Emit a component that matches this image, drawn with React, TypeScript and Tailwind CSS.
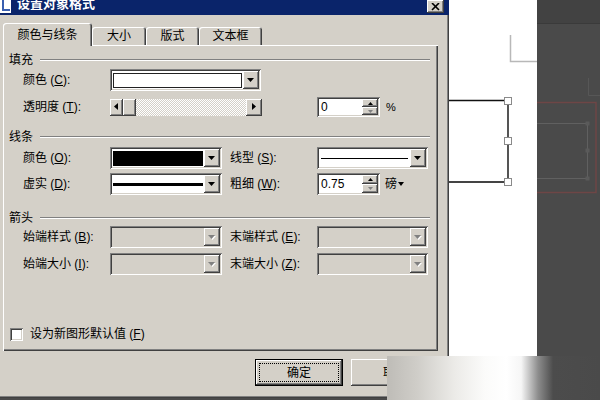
import React from 'react';

// classic 3D bevels
const RAISED = 'shadow-[inset_-1px_-1px_#404040,inset_1px_1px_#ffffff,inset_-2px_-2px_#808080,inset_2px_2px_#d4d0c8]';
const SUNKEN = 'shadow-[inset_1px_1px_#808080,inset_-1px_-1px_#ffffff,inset_2px_2px_#404040,inset_-2px_-2px_#d4d0c8]';

function Tri({ dir = 'down', disabled = false }: { dir?: 'down' | 'up' | 'left' | 'right'; disabled?: boolean }) {
  const d: Record<string, string> = {
    down: 'M0 0h7L3.5 4z',
    up: 'M0 4h7L3.5 0z',
    left: 'M4 0v7L0 3.5z',
    right: 'M0 0v7L4 3.5z',
  };
  const w = dir === 'left' || dir === 'right' ? 4 : 7;
  const h = dir === 'left' || dir === 'right' ? 7 : 4;
  return (
    <svg width={w + 1} height={h + 1} viewBox={`0 0 ${w + 1} ${h + 1}`}>
      {disabled && <path d={d[dir]} transform="translate(1 1)" fill="#ffffff" />}
      <path d={d[dir]} fill={disabled ? '#808080' : '#000000'} />
    </svg>
  );
}

function DropBtn({ disabled = false }: { disabled?: boolean }) {
  return (
    <div className={`w-[16px] h-full shrink-0 bg-[#d4d0c8] flex items-center justify-center ${RAISED}`}>
      <Tri disabled={disabled} />
    </div>
  );
}

function Combo({ w, children, disabled = false }: { w: string; children?: React.ReactNode; disabled?: boolean }) {
  return (
    <div className={`flex h-[22px] p-[2px] ${disabled ? 'bg-[#d4d0c8]' : 'bg-white'} ${SUNKEN} ${w}`}>
      <div className="flex-1 flex items-center px-[1px] min-w-0">{children}</div>
      <DropBtn disabled={disabled} />
    </div>
  );
}

function Spin({ value, h }: { value: string; h: string }) {
  return (
    <div className={`flex w-[63px] p-[2px] bg-white ${SUNKEN} ${h}`}>
      <span className="flex-1 pl-[2px] flex items-center">{value}</span>
      <div className="flex flex-col w-[16px]">
        <div className={`flex-1 bg-[#d4d0c8] flex items-center justify-center ${RAISED}`}>
          <svg width="5" height="3" viewBox="0 0 5 3"><path d="M0 3h5L2.5 0z" fill="#000" /></svg>
        </div>
        <div className={`flex-1 bg-[#d4d0c8] flex items-center justify-center ${RAISED}`}>
          <svg width="5" height="3" viewBox="0 0 5 3"><path d="M0 0h5L2.5 3z" fill="#808080" /></svg>
        </div>
      </div>
    </div>
  );
}

function Label({ text, k }: { text: string; k: string }) {
  return (
    <span className="w-[87px] shrink-0 whitespace-nowrap">
      {text} (<u>{k}</u>):
    </span>
  );
}

function Group({ title }: { title: string }) {
  return (
    <div className="flex items-center h-[14px] pl-[6px]">
      <span>{title}</span>
      <div className="flex-1 ml-[7px] mr-[8px] h-[2px] border-t border-[#808080] border-b border-b-white" />
    </div>
  );
}

function Tab({ label, w, active = false }: { label: string; w: string; active?: boolean }) {
  return (
    <div
      className={`${w} ${active ? 'h-[23px] -mb-[1px] z-10' : 'h-[18px]'} relative rounded-t-[3px] bg-[#d4d0c8] flex items-center justify-center shadow-[inset_1px_1px_#ffffff,inset_-1px_0_#404040,inset_-2px_0_#808080]`}
    >
      {label}
    </div>
  );
}

function Canvas() {
  return (
    <div className="flex h-full">
      <div className="w-[88px] h-full bg-white">
        <svg width="88" height="400" viewBox="0 0 88 400">
          <path d="M61.5 35V61.5H88" fill="none" stroke="#b8b8b8" strokeWidth="1.5" />
          <path d="M0 100.5H59" stroke="#111" strokeWidth="1.5" />
          <path d="M59 101V182" stroke="#555" strokeWidth="2" />
          <path d="M0 182H59" stroke="#444" strokeWidth="2" />
          {[101, 141, 182].map((y) => (
            <rect key={y} x="55.5" y={y - 3.5} width="7" height="7" fill="#fff" stroke="#8a8a8a" />
          ))}
        </svg>
      </div>
      <div className="w-[63px] h-full bg-[#4a4a4a]">
        <svg width="63" height="400" viewBox="0 0 63 400">
          <rect x="0" y="0" width="63" height="23" fill="#424242" />
          <path d="M0 23.5H63" stroke="#3a3a3a" />
          <path d="M51.5 78V95.5H63" fill="none" stroke="#575757" />
          <rect x="-2" y="102.5" width="61" height="90" fill="none" stroke="#6e4646" strokeWidth="1.5" />
          <path d="M0 123.5H50.5V178.5H0" fill="none" stroke="#606060" />
          {[123, 150, 178].map((y) => (
            <rect key={y} x="48.5" y={y - 1.5} width="4" height="4" fill="#5a5a5a" />
          ))}
        </svg>
      </div>
    </div>
  );
}

export default function App() {
  return (
    <div className="relative w-[600px] h-[400px] overflow-hidden flex bg-[#4a4a4a] text-[12px] text-black font-['Liberation_Sans','Noto_Sans_CJK_SC',sans-serif]">
      {/* Dialog */}
      <div className={`w-[449px] h-[398px] shrink-0 flex flex-col bg-[#d4d0c8] shadow-[inset_-1px_-1px_#404040,inset_-2px_-2px_#808080]`}>
        {/* Title bar */}
        <div className="h-[15px] shrink-0 bg-[#0a246a] flex items-start overflow-hidden">
          <svg width="12" height="13" viewBox="0 0 12 13" className="shrink-0">
            <rect x="0" y="0" width="11" height="13" fill="#ffffff" />
            <rect x="2" y="0" width="2" height="11" fill="#3a5fb0" />
            <rect x="4" y="9" width="6" height="2" fill="#3a5fb0" />
          </svg>
          <span className="ml-[5px] -mt-[4px] text-white font-bold text-[13px] leading-[16px] whitespace-nowrap">设置对象格式</span>
          <div className="flex-1" />
          <div className={`w-[17px] h-[13px] mr-[5px] bg-[#d4d0c8] flex items-center justify-center ${RAISED}`}>
            <svg width="9" height="8" viewBox="0 0 9 8">
              <path d="M1 0L8 7M8 0L1 7" stroke="#000" strokeWidth="1.6" />
            </svg>
          </div>
        </div>

        {/* Tabs */}
        <div className="h-[30px] shrink-0 flex items-end pl-[3px]">
          <Tab label="颜色与线条" w="w-[89px]" active />
          <Tab label="大小" w="w-[54px]" />
          <Tab label="版式" w="w-[53px]" />
          <Tab label="文本框" w="w-[63px]" />
        </div>

        {/* Panel */}
        <div className="ml-[3px] w-[435px] h-[306px] shrink-0 flex flex-col pt-[8px] shadow-[inset_1px_1px_#ffffff,inset_-1px_-1px_#404040,inset_-2px_-2px_#808080]">
          <Group title="填充" />
          <div className="flex items-center h-[22px] mt-[2px] pl-[20px]">
            <Label text="颜色" k="C" />
            <Combo w="w-[151px]">
              <div className="w-full h-[15px] border border-[#222] bg-white" />
            </Combo>
          </div>
          <div className="flex items-center h-[20px] mt-[6px] pl-[20px]">
            <Label text="透明度" k="T" />
            <div className="flex h-[17px] w-[152px] shrink-0">
              <div className={`w-[13px] bg-[#d4d0c8] flex items-center justify-center ${RAISED}`}>
                <Tri dir="left" />
              </div>
              <div className={`w-[13px] bg-[#d4d0c8] ${RAISED}`} />
              <div className="flex-1 bg-[repeating-conic-gradient(#ffffff_0%_25%,#d4d0c8_0%_50%)] bg-[length:2px_2px]" />
              <div className={`w-[16px] bg-[#d4d0c8] flex items-center justify-center ${RAISED}`}>
                <Tri dir="right" />
              </div>
            </div>
            <div className="ml-[55px]">
              <Spin value="0" h="h-[20px]" />
            </div>
            <span className="ml-[6px] text-[11px]">%</span>
          </div>

          <div className="mt-[13px]">
            <Group title="线条" />
          </div>
          <div className="flex items-center h-[22px] mt-[3px] pl-[20px]">
            <Label text="颜色" k="O" />
            <Combo w="w-[112px]">
              <div className="w-full h-[15px] bg-black" />
            </Combo>
            <div className="ml-[8px] flex items-center">
              <Label text="线型" k="S" />
              <Combo w="w-[111px]">
                <div className="w-full h-px bg-black mx-[1px]" />
              </Combo>
            </div>
          </div>
          <div className="flex items-center h-[22px] mt-[4px] pl-[20px]">
            <Label text="虚实" k="D" />
            <Combo w="w-[112px]">
              <div className="w-full h-[3px] bg-black" />
            </Combo>
            <div className="ml-[8px] flex items-center">
              <Label text="粗细" k="W" />
              <Spin value="0.75" h="h-[22px]" />
              <span className="ml-[5px] flex items-center">
                磅
                <svg width="6" height="4" viewBox="0 0 6 4" className="ml-[1px]"><path d="M0 0h6L3 4z" fill="#000" /></svg>
              </span>
            </div>
          </div>

          <div className="mt-[16px]">
            <Group title="箭头" />
          </div>
          <div className="flex items-center h-[22px] mt-[1px] pl-[20px]">
            <Label text="始端样式" k="B" />
            <Combo w="w-[112px]" disabled />
            <div className="ml-[8px] flex items-center">
              <Label text="末端样式" k="E" />
              <Combo w="w-[111px]" disabled />
            </div>
          </div>
          <div className="flex items-center h-[22px] mt-[5px] pl-[20px]">
            <Label text="始端大小" k="I" />
            <Combo w="w-[112px]" disabled />
            <div className="ml-[8px] flex items-center">
              <Label text="末端大小" k="Z" />
              <Combo w="w-[111px]" disabled />
            </div>
          </div>

          <div className="flex items-center h-[14px] mt-[52px] pl-[7px]">
            <div className={`w-[13px] h-[13px] bg-white ${SUNKEN}`} />
            <span className="ml-[7px]">
              设为新图形默认值 (<u>F</u>)
            </span>
          </div>
        </div>

        {/* Buttons */}
        <div className="flex mt-[8px] pl-[255px] gap-[8px]">
          <div className="w-[88px] h-[27px] border border-black">
            <div className={`h-full p-[3px] bg-[#d4d0c8] flex ${RAISED}`}>
              <div className="flex-1 border border-dotted border-black flex items-center justify-center">确定</div>
            </div>
          </div>
          <div className={`w-[88px] h-[27px] bg-[#d4d0c8] flex items-center justify-center ${RAISED}`}>取消</div>
        </div>
      </div>

      <Canvas />

      {/* blurred watermark strip over the bottom right */}
      <div className="absolute left-[387px] top-[356px] w-[213px] h-[44px] bg-[linear-gradient(90deg,#bebcb7_0%,#cfcdc8_14%,#ecebe8_32%,#fbfbfa_46%,#ffffff_56%,#f6f6f6_63%,#8c8c8c_71%,#4c4c4c_78%,#4a4a4a_100%)]" />
    </div>
  );
}
